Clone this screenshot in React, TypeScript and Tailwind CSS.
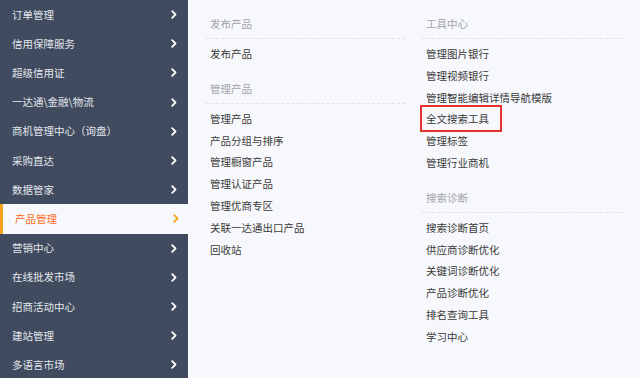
import React from "react";

const side = [
  "订单管理",
  "信用保障服务",
  "超级信用证",
  "一达通\\金融\\物流",
  "商机管理中心（询盘）",
  "采购直达",
  "数据管家",
  "产品管理",
  "营销中心",
  "在线批发市场",
  "招商活动中心",
  "建站管理",
  "多语言市场",
];

function Chevron({ color }: { color: string }) {
  return (
    <svg width="6" height="9" viewBox="0 0 6 9" fill="none">
      <path d="M1.2 1.2 L4.5 4.5 L1.2 7.8" stroke={color} strokeWidth="1.8" strokeLinecap="round" strokeLinejoin="round" />
    </svg>
  );
}

type Sec = { title: string; items: string[]; boxed?: string };

function Section({ sec, first }: { sec: Sec; first?: boolean }) {
  return (
    <div className={first ? "" : "mt-[13px]"}>
      <div className="h-[26px] border-b border-dashed border-[#dfe2ea] pl-[4px] text-[#a0a3aa] leading-[22px]">
        {sec.title}
      </div>
      <div className="pt-[4px]">
        {sec.items.map((it) => (
          <div key={it} className="h-[21.8px] leading-[21.8px] pl-[4px] text-[#3a3a3a]">
            {it === sec.boxed ? (
              <span className="relative">
                {it}
                <span className="absolute left-[-6px] right-[-13px] top-[-6px] bottom-[-6px] border-2 border-[#e3342f]" />
              </span>
            ) : (
              it
            )}
          </div>
        ))}
      </div>
    </div>
  );
}

export default function App() {
  const left: Sec[] = [
    { title: "发布产品", items: ["发布产品"] },
    {
      title: "管理产品",
      items: ["管理产品", "产品分组与排序", "管理橱窗产品", "管理认证产品", "管理优商专区", "关联一达通出口产品", "回收站"],
    },
  ];
  const right: Sec[] = [
    {
      title: "工具中心",
      items: ["管理图片银行", "管理视频银行", "管理智能编辑详情导航模版", "全文搜索工具", "管理标签", "管理行业商机"],
      boxed: "全文搜索工具",
    },
    {
      title: "搜索诊断",
      items: ["搜索诊断首页", "供应商诊断优化", "关键词诊断优化", "产品诊断优化", "排名查询工具", "学习中心"],
    },
  ];
  return (
    <div
      className="flex w-[640px] h-[378px] overflow-hidden bg-[#f7f8fb] text-[10.5px]"
      style={{ fontFamily: '"Noto Sans CJK SC", "Noto Sans", sans-serif' }}
    >
      <div className="w-[190px] shrink-0 bg-[#404b5f] border-r-2 border-[#fdfdfe] flex flex-col">
        {side.map((s, i) => {
          const active = i === 7;
          return (
            <div
              key={s}
              className={
                "h-[29.2px] shrink-0 flex items-center justify-between pl-[12px] pr-[11px] " +
                (active
                  ? "bg-[#f7f8fb] text-[#ff6a1a] border-l-[3px] border-[#f7a21b] pl-[9px] mr-[-2px]"
                  : "text-[#e3e6ec]")
              }
            >
              <span>{s}</span>
              <Chevron color={active ? "#f5a623" : "#ffffff"} />
            </div>
          );
        })}
      </div>
      <div className="flex pt-[13px] pl-[16px] gap-[17px]">
        <div className="w-[199px]">
          {left.map((s, i) => (
            <Section key={s.title} sec={s} first={i === 0} />
          ))}
        </div>
        <div className="w-[201px]">
          {right.map((s, i) => (
            <Section key={s.title} sec={s} first={i === 0} />
          ))}
        </div>
      </div>
    </div>
  );
}
